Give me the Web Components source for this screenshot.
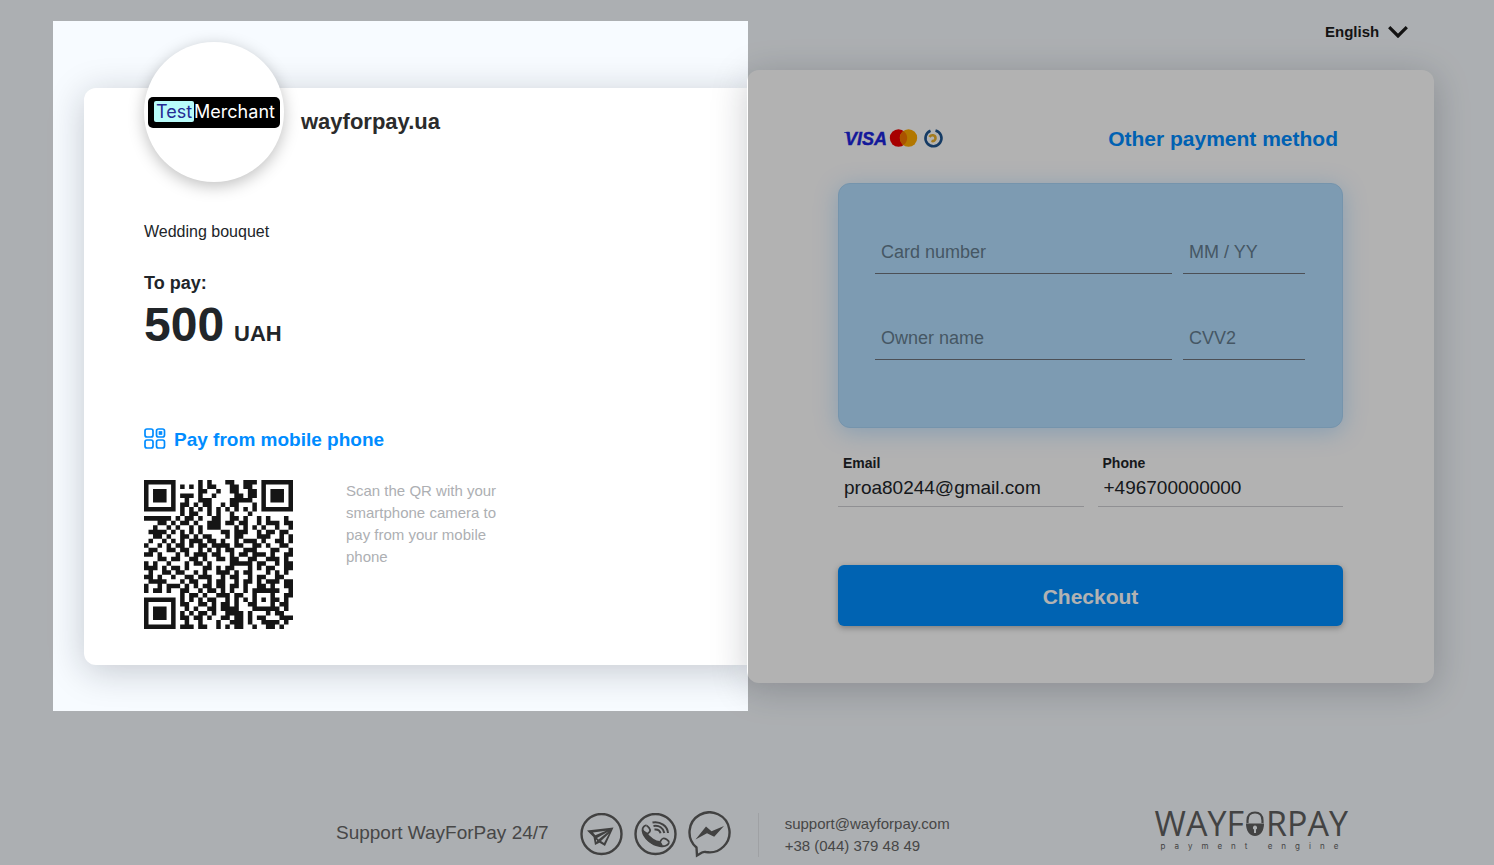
<!DOCTYPE html>
<html lang="en">
<head>
<meta charset="utf-8">
<meta name="viewport" content="width=device-width, initial-scale=1">
<title>WayForPay checkout</title>
<style>
    body {
        margin: 0;
        background: #f7fbff;
        color: #212529;
        font-family: "Liberation Sans", Arial, sans-serif;
        font-size: 16px;
    }
    main {
        display: grid;
        grid-template-columns: 695fr 686fr;
        align-items: start;
        padding: 0 60px 0 53px;
    }
</style>
</head>
<body>
<main>
    <order-summary>
        <merchant-logo slot="logo"></merchant-logo>
        <span slot="merchant">wayforpay.ua</span>
        <span slot="product">Wedding bouquet</span>
        <span slot="amount">500</span>
        <span slot="currency">UAH</span>
        <qr-code slot="qr"></qr-code>
    </order-summary>
    <payment-panel></payment-panel>
</main>
<support-footer></support-footer>

<script>
class MerchantLogo extends HTMLElement {
    constructor() {
        super()
        this.attachShadow({ mode: 'open' })
        this.shadowRoot.innerHTML = /*html*/`
        <style>
            :host {
                display: flex;
                align-items: center;
                justify-content: center;
                flex: none;
                width: 140px;
                height: 140px;
                border-radius: 50%;
                background: #fff;
                box-shadow: 0 4px 16px rgba(0, 0, 0, .25);
            }
            div {
                display: flex;
                align-items: center;
                box-sizing: border-box;
                width: 132px;
                height: 31px;
                padding: 0 0 2px 6px;
                border-radius: 5px;
                background: #000;
                color: #fff;
                font: 18px/21px Inter, sans-serif;
            }
            mark {
                padding: 0 2px;
                border-radius: 2px;
                background: #b8fcfa;
                color: #252b93;
            }
        </style>
        <div><mark>Test</mark><span>Merchant</span></div>
        `
    }
}

class QrCode extends HTMLElement {
    constructor() {
        super()
        this._rows = [
            '#######.....#.#...##..###.#######',
            '#.....#.#.#.#.##...##.##..#.....#',
            '#.###.#.....##..#..##..##.#.###.#',
            '#.###.#.###.#..#....##.##.#.###.#',
            '#.###.#..#..###....#####..#.###.#',
            '#.....#.##.#.##..#.##...#.#.....#',
            '#######.#.#.#.#.#.#.#.#.#.#######',
            '........#.##..#.#..#...#.........',
            '######.#.##.#..##..##.#..#.#...#.',
            '...##.#.##.#..###.##.##..#.###.##',
            '..#..#.#..#.#.###...#.#.#.#..#..#',
            '.####.#.#.#.#....##.###..#.##.##.',
            '..##.#..##.#.##...#.##...###..#.#',
            '.#..#.#.#.###.##.#..#.###.#..##.#',
            '#..#.#.##.#.##.####.##..##.#..##.',
            '.##..##.##..#.#.#.##..###...##..#',
            '##.#...#.#.###.##..#.##.###.#..##',
            '...##.##..##.#..##.##..##..###.#.',
            '#.#..#...#.##.#....#####.##..#.##',
            '###.#.##.#...##.#.##...#.#.##..##',
            '.#..##.##..#.#..###.#.##...#.#.#.',
            '##.#..#..##.###..#.##..#.##..##..',
            '.####...#.##..#.##..#.##.#.###.##',
            '#..#.###.#.#.##.##.##.#..##.#..##',
            '#.##.#..##..#.##.#.#..#.######..#',
            '........#.##.#..###.##..#...#..##',
            '#######.#.#.#.##..#.#.#.#.#.##.#.',
            '#.....#.##..##.#.##.#..##...#.##.',
            '#.###.#..#.#..##.####...######.#.',
            '#.###.#.#.#.##.#..####.#...#.##..',
            '#.###.#.##.##.#..##.##.#.##...###',
            '#.....#..#..#...#..###.#..####.#.',
            '#######.###.##..#.#.##..#..##.#..'
        ]
        this.attachShadow({ mode: 'open' })
        this.shadowRoot.innerHTML = /*html*/`
        <style>
            :host {
                display: block;
                flex: none;
                width: 149px;
                height: 149px;
            }
            svg {
                display: block;
                width: 100%;
                height: 100%;
            }
        </style>
        <svg viewBox="0 0 33 33" role="img" aria-label="QR code"><path fill="#151515"/></svg>
        `
    }

    connectedCallback() {
        let d = ''
        this._rows.forEach((row, y) => {
            for (const run of row.matchAll(/#+/g)) {
                const w = run[0].length
                d += `M${run.index} ${y}h${w}v1h-${w}z`
            }
        })
        this.shadowRoot.querySelector('path').setAttribute('d', d)
    }
}

class OrderSummary extends HTMLElement {
    constructor() {
        super()
        this.attachShadow({ mode: 'open' })
        this.shadowRoot.innerHTML = /*html*/`
        <style>
            :host {
                display: block;
                position: relative;
                margin-top: 21px;
                padding: 67px 0 46px 31px;
            }
            /* tour spotlight: dims everything outside of this block */
            :host::after {
                content: "";
                position: absolute;
                inset: 0;
                z-index: 2;
                box-shadow: 0 0 0 9999px rgba(0, 0, 0, .3);
                pointer-events: none;
            }
            article {
                display: flow-root;
                padding: 0 60px 36px;
                border-radius: 12px 0 0 12px;
                background: #fff;
                box-shadow: 0 6px 36px rgba(20, 22, 36, .22);
            }
            /* the logo sticks out above the card */
            header {
                display: flex;
                align-items: center;
                gap: 17px;
                margin-top: -46px;
            }
            h1 {
                margin: 20px 0 0;
                font-size: 22px;
                line-height: 26px;
                color: #2b2b2b;
            }
            .product {
                margin: 40px 0 0;
                line-height: 20px;
            }
            .label {
                margin: 29px 0 0;
                font-size: 18px;
                line-height: 24px;
                font-weight: bold;
            }
            .total {
                display: flex;
                align-items: baseline;
                gap: 10px;
                margin: 2px 0 0;
                font-weight: bold;
                font-size: 48px;
                line-height: 56px;
            }
            .total small {
                font-size: 22px;
            }
            h2 {
                display: flex;
                align-items: center;
                gap: 8px;
                margin: 66px 0 0;
                color: #008cff;
                font-size: 19px;
                line-height: 24px;
            }
            h2 svg {
                padding-bottom: 2px;
            }
            .scan {
                display: flex;
                gap: 53px;
                margin-top: 28px;
            }
            .scan p {
                width: 160px;
                margin: 0;
                color: #adafb3;
                font-size: 15px;
                line-height: 22px;
            }
        </style>
        <article>
            <header>
                <slot name="logo"></slot>
                <h1><slot name="merchant"></slot></h1>
            </header>
            <p class="product"><slot name="product"></slot></p>
            <p class="label">To pay:</p>
            <p class="total"><slot name="amount"></slot> <small><slot name="currency"></slot></small></p>
            <h2>
                <svg width="22" height="22" viewBox="0 0 22 22" fill="none" stroke="currentColor" stroke-width="1.7" aria-hidden="true">
                    <rect x="1" y="1" width="8" height="8" rx="2"/>
                    <rect x="12.500" y="1" width="8" height="8" rx="2"/>
                    <rect x="1" y="12" width="8" height="8" rx="2"/>
                    <rect x="12.500" y="12" width="8" height="8" rx="2"/>
                    <rect x="15.200" y="3.700" width="2.600" height="2.600" fill="currentColor" stroke-width="1"/>
                </svg>
                Pay from mobile phone
            </h2>
            <div class="scan">
                <slot name="qr"></slot>
                <p>Scan the QR with your smartphone camera to pay from your mobile phone</p>
            </div>
        </article>
        `
    }
}

class LanguageSelect extends HTMLElement {
    constructor() {
        super()
        this.attachShadow({ mode: 'open' })
        this.shadowRoot.innerHTML = /*html*/`
        <style>
            :host {
                display: inline-grid;
                align-items: center;
            }
            select, svg {
                grid-area: 1 / 1;
            }
            select {
                appearance: none;
                padding: 0 28px 0 0;
                border: 0;
                background: none;
                color: #1c1c1c;
                font: bold 15px/24px "Liberation Sans", Arial, sans-serif;
            }
            svg {
                justify-self: end;
                pointer-events: none;
            }
        </style>
        <select aria-label="Language"><option>English</option></select>
        <svg width="20" height="12" viewBox="0 0 20 12" fill="none" stroke="#1c1c1c" stroke-width="3.2" aria-hidden="true">
            <path d="M1.2 1.2 10 10l8.800-8.800"/>
        </svg>
        `
    }
}

class PaymentSystems extends HTMLElement {
    constructor() {
        super()
        this.attachShadow({ mode: 'open' })
        this.shadowRoot.innerHTML = /*html*/`
        <style>
            :host {
                display: block;
            }
            svg {
                display: block;
            }
            text {
                font: italic bold 18px "Liberation Sans", Arial, sans-serif;
            }
        </style>
        <svg width="100" height="20" viewBox="0 0 100 20" role="img" aria-label="Visa, Mastercard, Prostir">
            <path d="M0 3h5.500v3.500C4 4.600 2 3.900 0 3.500z" fill="#1c25dd"/>
            <text x="1" y="16" fill="#1c25dd" stroke="#1c25dd" stroke-width=".4">VISA</text>
            <circle cx="54.500" cy="9" r="8.700" fill="#f00000"/>
            <circle cx="64.500" cy="9" r="8.700" fill="#ffab00"/>
            <path d="M59.500 1.900a8.700 8.700 0 0 1 0 14.200 8.700 8.700 0 0 1 0-14.200z" fill="#f57600"/>
            <path d="M91.500 1.500A8 8 0 1 1 86.500 1.800" fill="none" stroke="#1f5590" stroke-width="2.600"/>
            <path d="M85.500 8c1.500-2.700 6-2.300 6 1.200 0 2.300-2 3.400-4 2.600" fill="none" stroke="#e9b02d" stroke-width="2.600"/>
        </svg>
        `
    }
}

class CardField extends HTMLElement {
    constructor() {
        super()
        this.attachShadow({ mode: 'open' })
        this.shadowRoot.innerHTML = /*html*/`
        <style>
            :host {
                display: block;
                min-width: 0;
            }
            input {
                display: block;
                box-sizing: border-box;
                width: 100%;
                height: 44px;
                padding: 2px 6px 0;
                border: 0;
                border-bottom: 1px solid #6d737c;
                background: none;
                color: #212529;
                font: 18px "Liberation Sans", Arial, sans-serif;
            }
            input::placeholder {
                color: #647d90;
                opacity: 1;
            }
        </style>
        <input type="text">
        `
    }

    connectedCallback() {
        const input = this.shadowRoot.querySelector('input')
        input.placeholder = this.getAttribute('label')
        input.setAttribute('aria-label', this.getAttribute('label'))
    }
}

class ContactField extends HTMLElement {
    constructor() {
        super()
        this.attachShadow({ mode: 'open' })
        this.shadowRoot.innerHTML = /*html*/`
        <style>
            :host {
                display: block;
                min-width: 0;
            }
            label {
                display: block;
                padding-left: 5px;
                font-size: 14px;
                line-height: 18px;
                font-weight: bold;
            }
            input {
                display: block;
                box-sizing: border-box;
                width: 100%;
                height: 35px;
                padding: 0 6px 2px;
                border: 0;
                border-bottom: 1px solid #cfcfd3;
                background: none;
                color: #212529;
                font: 19px "Liberation Sans", Arial, sans-serif;
            }
        </style>
        <label for="field"><slot></slot></label>
        <input id="field">
        `
    }

    connectedCallback() {
        const input = this.shadowRoot.querySelector('input')
        input.type = this.getAttribute('type')
        input.value = this.getAttribute('value')
    }
}

class PaymentPanel extends HTMLElement {
    constructor() {
        super()
        this.attachShadow({ mode: 'open' })
        this.shadowRoot.innerHTML = /*html*/`
        <style>
            :host {
                display: block;
            }
            nav {
                display: flex;
                justify-content: flex-end;
                padding: 20px 26px 26px 0;
            }
            form {
                position: relative;
                z-index: 1;
                margin-left: -1px;
                padding: 54px 91px 57px;
                border-radius: 12px;
                background: #fff;
                box-shadow: 0 6px 36px rgba(20, 22, 36, .22);
            }
            .methods {
                display: flex;
                align-items: center;
                justify-content: space-between;
                padding: 0 5px 0 6px;
            }
            a {
                color: #008cff;
                font-size: 21px;
                line-height: 30px;
                font-weight: bold;
                text-decoration: none;
            }
            .card {
                display: grid;
                grid-template-columns: 297fr 122fr;
                gap: 42px 11px;
                margin-top: 29px;
                padding: 46px 37px 67px 36px;
                border: 1px solid #a8d4f7;
                border-radius: 12px;
                background: #b4dfff;
                box-shadow: 0 4px 24px rgba(0, 140, 255, .25);
            }
            .contacts {
                display: grid;
                grid-template-columns: 1fr 1fr;
                gap: 14px;
                margin-top: 26px;
            }
            button {
                display: block;
                width: 100%;
                height: 61px;
                margin-top: 58px;
                padding: 3px 0 0;
                border: 0;
                border-radius: 6px;
                background: #008fff;
                box-shadow: 0 2px 6px rgba(0, 0, 0, .3);
                color: #fff;
                font: bold 21px "Liberation Sans", Arial, sans-serif;
            }
        </style>
        <nav><language-select></language-select></nav>
        <form>
            <div class="methods">
                <payment-systems></payment-systems>
                <a href="#methods">Other payment method</a>
            </div>
            <div class="card">
                <card-field label="Card number"></card-field>
                <card-field label="MM / YY"></card-field>
                <card-field label="Owner name"></card-field>
                <card-field label="CVV2"></card-field>
            </div>
            <div class="contacts">
                <contact-field type="email" value="proa80244@gmail.com">Email</contact-field>
                <contact-field type="tel" value="+496700000000">Phone</contact-field>
            </div>
            <button type="button">Checkout</button>
        </form>
        `
    }
}

class WayforpayLogo extends HTMLElement {
    constructor() {
        super()
        this.attachShadow({ mode: 'open' })
        this.shadowRoot.innerHTML = /*html*/`
        <style>
            :host {
                display: block;
                color: #616161;
            }
            div {
                display: flex;
                align-items: center;
                gap: 2px;
                font: 34px/30px "Open Sans", sans-serif;
            }
            p {
                margin: 3px -9px 0 0;
                padding-left: 6px;
                font: 8px/10px Inter, sans-serif;
                letter-spacing: 9px;
                white-space: nowrap;
            }
        </style>
        <div>
            <span>WAYF</span>
            <svg width="18" height="25" viewBox="0 0 18 25" aria-hidden="true">
                <path d="M1.500 12V9.500C1.500 4.500 4.500 1.500 9 1.500s7.500 3 7.500 8V12" fill="none" stroke="currentColor" stroke-width="2.200"/>
                <path d="M0 12.500h18C18 20 14.500 25 9 25S0 20 0 12.500z" fill="currentColor"/>
                <path d="M9 14.500a2.200 2.200 0 0 1 1 4.100V22H8v-3.400a2.200 2.200 0 0 1 1-4.100z" fill="#f7fbff"/>
            </svg>
            <span>RPAY</span>
        </div>
        <p>payment engine</p>
        `
    }
}

class SupportFooter extends HTMLElement {
    constructor() {
        super()
        this.attachShadow({ mode: 'open' })
        this.shadowRoot.innerHTML = /*html*/`
        <style>
            :host {
                display: block;
                color: #666;
            }
            footer {
                display: flex;
                align-items: center;
                padding: 97px 146px 5px 336px;
            }
            .title {
                font-size: 19px;
                line-height: 24px;
                padding-bottom: 4px;
            }
            .icons {
                display: flex;
                align-items: center;
                gap: 11px;
                margin-left: 31px;
            }
            a {
                color: inherit;
                text-decoration: none;
            }
            svg {
                display: block;
                fill: none;
                stroke: #5e5e5e;
                stroke-width: 2.4;
            }
            .solid {
                fill: #5e5e5e;
                stroke: none;
            }
            address {
                display: flex;
                flex-direction: column;
                margin-left: 27px;
                padding-left: 26px;
                border-left: 1px solid #e4e7eb;
                font-size: 15px;
                line-height: 22px;
                font-style: normal;
            }
            wayforpay-logo {
                margin-left: auto;
                padding-bottom: 10px;
            }
        </style>
        <footer>
            <span class="title">Support WayForPay 24/7</span>
            <div class="icons">
                <a href="#telegram" aria-label="Telegram">
                    <svg width="43" height="43" viewBox="0 0 43 43">
                        <circle cx="21.500" cy="21" r="20"/>
                        <path class="solid" fill-rule="evenodd" d="M7 17.500 33.500 14.500 25 33l-5.500-3.200L15 32l-1.500-8zM13 19.500l2.300 2.800L26 17.800zM28.500 18.500 17 25l1.500 1.500zM29 20.500l-8 7.500 3 2zM16 26.500v2.500l1.200-1.200z"/>
                    </svg>
                </a>
                <a href="#call" aria-label="Call">
                    <svg width="43" height="43" viewBox="0 0 43 43">
                        <circle cx="21.500" cy="21" r="20"/>
                        <path stroke-width="1.800" stroke-linejoin="round" d="M12.500 12.500c-1.500-.5-4.500 2-4 5 1 7 9 14.500 17.500 15.500 3 .5 7.500.500 9-3.500"/>
                        <path stroke-width="1.800" d="M12.500 12.500c2 1 4 4 3.500 5.500s-2 2-2.500 3L9 18M35 29.500c0-2-4-4.500-6-4s-2 2.500-3 3.500l2 4"/>
                        <path class="solid" d="M9 16c1 3 3.500 3.500 5.500 5.500 3 3 7.500 6.500 11 6.500l2 5.500C18 33.500 9 25 8.500 18z"/>
                        <path stroke-width="2" d="M18.500 9.500c8-1.500 15 3.500 15.500 10.500M19.500 13c5.500-1 10 2 10.800 7M20.500 16.500c3-.3 5.500 1 6 3.800"/>
                    </svg>
                </a>
                <a href="#messenger" aria-label="Messenger">
                    <svg width="43" height="47" viewBox="0 0 43 47">
                        <path d="M8.500 36.500A20 20 0 1 1 18 41q-2-.5-4 .5l-5 3z"/>
                        <path class="solid" d="m7.500 28.500 10.500-13 5.500 4.700L36 15l-9.800 10.700-7.200-3.500z"/>
                    </svg>
                </a>
            </div>
            <address>
                <a href="mailto:support@wayforpay.com">support@wayforpay.com</a>
                <a href="tel:+380443794849">+38 (044) 379 48 49</a>
            </address>
            <wayforpay-logo></wayforpay-logo>
        </footer>
        `
    }
}

customElements.define('merchant-logo', MerchantLogo)
customElements.define('qr-code', QrCode)
customElements.define('order-summary', OrderSummary)
customElements.define('language-select', LanguageSelect)
customElements.define('payment-systems', PaymentSystems)
customElements.define('card-field', CardField)
customElements.define('contact-field', ContactField)
customElements.define('payment-panel', PaymentPanel)
customElements.define('wayforpay-logo', WayforpayLogo)
customElements.define('support-footer', SupportFooter)
</script>
</body>
</html>
